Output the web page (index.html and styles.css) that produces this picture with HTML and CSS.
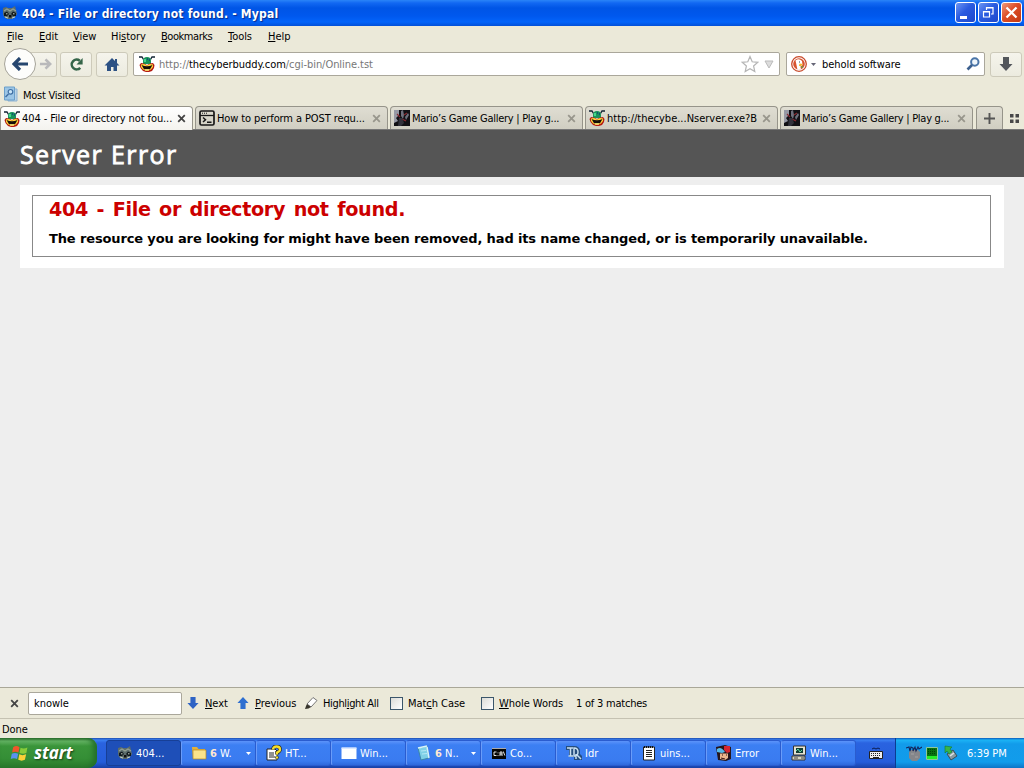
FILE: index.html
```html
<!DOCTYPE html>
<html lang="en">
<head>
<meta charset="utf-8">
<title>404 - File or directory not found. - Mypal</title>
<link rel="stylesheet" href="styles.css">
</head>
<body>
<svg class="defs" width="0" height="0">
  <symbol id="raccoon" viewBox="0 0 16 16"><path d="M1 3 4 2l2 1h4l3-2 1 4 1 4-2 3-3 2H5l-3-2-1-3z" fill="#5c6d6c"/><path d="M2 6 5 4l3 2 3-2 3 2" fill="none" stroke="#94a193" stroke-width="1.200"/><path d="M2 8l3-1.500L7 9l-2 2H2zM9 9l2-2.500L14 8v3h-3z" fill="#10191b"/><path d="M4 8.800h1.500M11 8.800h1.500M3 12l3 1M13 12l-3 1" stroke="#c6cec2"/><path d="M7 10h2.500v2.500H7z" fill="#111"/></symbol>
  <symbol id="buddy" viewBox="0 0 16 16"><path d="M0 1h3l1.500 2.500M16 1h-3l-1.500 2.500" fill="none" stroke="#123" stroke-width="1.300"/><path d="M4 5Q4 1 8 1t4 4v3H4z" fill="#18945a"/><path d="M5 3h2v3H5z" fill="#45d58b"/><path d="M8 3h1M10 4h1" stroke="#113b80" stroke-width="1.500"/><path d="M2 7 .5 9l1 3 2.500 3 3 1h3l3-1 2-3 .5-3L14 7l-3 .5L8 9 5 7.500z" fill="#b51b12"/><path d="M2 8.500 5 8l3 1.500L11 8l3 .5V11l-2 2.500-3 1.200H7L4 13.500 2 11z" fill="#ffd83b"/><path d="M2.500 9Q8 11.500 13.500 9L11 13.300H5z" fill="#160d08"/><path d="M6 14h4" stroke="#fff29b"/></symbol>
  <symbol id="mario" viewBox="0 0 16 16"><path d="M0 0h16v16H0z" fill="#111014"/><path d="M0 0h5v5L2 8l2 3-4 2z" fill="#9799a5"/><path d="m7 1 2-1 1 5-1 4-2-3zM11 7l3-4 1 2-3 5z" fill="#6f717e"/><path d="m3 4 3 3M10 5l3-2M8 9l4 2" stroke="#8a2a32" stroke-width="1.200"/><path d="M5 8h3l2 5-3 3H4z" fill="#31313b"/></symbol>
  <symbol id="x" viewBox="0 0 9 9"><path d="m1.200 1.200 6.600 6.600m0-6.600L1.200 7.800" fill="none" stroke="currentColor" stroke-width="1.800"/></symbol>
  <symbol id="down" viewBox="0 0 14 16"><path d="M4 1h6v7h3.500L7 15 .5 8H4z"/></symbol>
</svg>

<header class="titlebar">
  <svg class="i16 app"><use href="#raccoon"/></svg>
  <span class="title">404 - File or directory not found. - Mypal</span>
  <div class="winbtns">
    <span class="wb"><svg viewBox="0 0 21 21"><path d="M5 14h7v3H5z" fill="#fff"/></svg></span>
    <span class="wb"><svg viewBox="0 0 21 21"><path d="M5.500 9.500h6V15h-6zM5 10h7M8.500 8V5.500H15V12h-2M8.500 6H15" fill="none" stroke="#fff" stroke-width="1.200"/></svg></span>
    <span class="wb close"><svg viewBox="0 0 21 21"><path d="m5.500 5.500 10 10m0-10-10 10" stroke="#fff" stroke-width="2.300"/></svg></span>
  </div>
</header>

<nav class="menu">
  <span class="m1"><u>F</u>ile</span><span class="m2"><u>E</u>dit</span><span class="m3"><u>V</u>iew</span><span class="m4">Hi<u>s</u>tory</span><span class="m5"><u>B</u>ookmarks</span><span class="m6"><u>T</u>ools</span><span class="m7"><u>H</u>elp</span>
</nav>

<div class="nav">
  <div class="back"><svg viewBox="0 0 16 14"><path d="M8 1 2 7l6 6M2.500 7H16" fill="none" stroke="#26466f" stroke-width="3.200"/></svg></div>
  <div class="btn fwd"><svg viewBox="0 0 14 12"><path d="m7 1 5 5-5 5M11 6H1" fill="none" stroke="#b9b9bb" stroke-width="2.800"/></svg></div>
  <div class="btn reload"><svg viewBox="0 0 16 16"><path d="M12 11.500A5.200 5.200 0 1 1 11.500 4" fill="none" stroke="#346448" stroke-width="2.700"/><path d="M14.500 1v7H8z" fill="#346448"/></svg></div>
  <div class="btn home"><svg viewBox="0 0 16 15"><path d="M8 1 .5 8.500H3V14h4v-4h2.500v4H13V8.500h2.500L13 6V2h-2v2z" fill="#2c5184"/></svg></div>
  <div class="field url"><svg class="i16"><use href="#buddy"/></svg><span class="addr">http://<b>thecyberbuddy.com</b>/cgi-bin/Online.tst</span>
    <svg class="star" viewBox="0 0 18 18"><path d="m9 1.500 2.200 5.300 5.600.5-4.200 3.700 1.200 5.600L9 13.700l-4.800 2.900 1.200-5.600L1.200 7.300l5.600-.5z" fill="#fff" stroke="#b5b5b5" stroke-width="1.200"/></svg>
    <svg class="tri" viewBox="0 0 10 9"><path d="M1 1h8L5 8z" fill="#ddd" stroke="#bbb"/></svg></div>
  <div class="field search"><svg class="i16" viewBox="0 0 16 16"><circle cx="8" cy="8" r="7.300" fill="#fff" stroke="#c84a2b" stroke-width="1.300"/><circle cx="8" cy="8" r="5.800" fill="#d8532f"/><path d="M4.500 4.500Q8 2 11 5l.5 4-2 1.500.5 3-3.500.5-1-5z" fill="#fff"/><path d="m8.500 7.500 3.500.5-2 2H8z" fill="#f7b52c"/><path d="m9 11 3-1v2z" fill="#55a64b"/><path d="M8 6h1" stroke="#246"/></svg>
    <svg class="caret" viewBox="0 0 5 3"><path d="M0 0h5L2.500 3z" fill="#667"/></svg><span class="query">behold software</span>
    <svg class="mag" viewBox="0 0 14 14"><circle cx="8.800" cy="5" r="3.700" fill="#eef5fb" stroke="#4a75a8" stroke-width="2"/><path d="M6 8 1.500 12.500" stroke="#3b5f8e" stroke-width="2.600"/></svg></div>
  <div class="btn dl"><svg viewBox="0 0 14 16"><use href="#down" fill="#53565b"/></svg></div>
</div>

<div class="bookmarks"><svg class="i16" viewBox="0 0 16 16"><path d="M5 3h9v12H5z" fill="#bcd4e6" stroke="#8fb3d3"/><path d="M1.500 1h10v13h-10z" fill="#9cc6e6" stroke="#6b9fca"/><circle cx="7.500" cy="5.800" r="2.300" fill="#c9e5f8" stroke="#3f6fa3" stroke-width="1.200"/><path d="m5.500 8-3 3" stroke="#3f6fa3" stroke-width="1.500"/></svg><span>Most Visited</span></div>

<div class="tabs">
  <div class="tab on"><svg class="i16"><use href="#buddy"/></svg><span class="t1">404 - File or directory not fou...</span><svg class="tx"><use href="#x"/></svg></div>
  <div class="tab"><svg class="i16" viewBox="0 0 16 16"><rect x="1" y="1" width="14" height="14" rx="1.500" fill="none" stroke="#171717" stroke-width="1.700"/><path d="M1 5.500h14" stroke="#171717" stroke-width="1.300"/><path d="M3 3.200h1m1 0h1m1 0h1" stroke="#171717"/><path d="m4 7.500 2.500 2.200L4 12M8 12.300h4.500" fill="none" stroke="#171717" stroke-width="1.500"/></svg><span class="t2">How to perform a POST requ...</span><svg class="tx"><use href="#x"/></svg></div>
  <div class="tab"><svg class="i16"><use href="#mario"/></svg><span class="t3">Mario’s Game Gallery | Play g...</span><svg class="tx"><use href="#x"/></svg></div>
  <div class="tab"><svg class="i16"><use href="#buddy"/></svg><span class="t4">http://thecybe...Nserver.exe?B</span><svg class="tx"><use href="#x"/></svg></div>
  <div class="tab"><svg class="i16"><use href="#mario"/></svg><span class="t3">Mario’s Game Gallery | Play g...</span><svg class="tx"><use href="#x"/></svg></div>
  <div class="tab new"><svg viewBox="0 0 11 11"><path d="M5.500 0v11M0 5.500h11" stroke="#555" stroke-width="1.900"/></svg></div>
  <svg class="grid" viewBox="0 0 9 9"><path d="M0 0h3.500v3.500H0zM5.500 0H9v3.500H5.500zM0 5.500h3.500V9H0zM5.500 5.500H9V9H5.500z" fill="#484848"/></svg>
</div>

<main class="page">
  <div class="head"><h1>Server Error</h1></div>
  <div class="card"><div class="frame"><h2>404 - File or directory not found.</h2><h3>The resource you are looking for might have been removed, had its name changed, or is temporarily unavailable.</h3></div></div>
</main>

<div class="find">
  <svg class="fx"><use href="#x"/></svg>
  <div class="finput">knowle</div>
  <svg class="arr" viewBox="0 0 14 16"><use href="#down" fill="#2e63c4"/></svg><span class="f1"><u>N</u>ext</span>
  <svg class="arr up" viewBox="0 0 14 16"><use href="#down" fill="#2e6fd0"/></svg><span class="f2"><u>P</u>revious</span>
  <svg class="pen" viewBox="0 0 14 14"><path d="m3 8 6-6.500 4 3L7 11z" fill="#fff" stroke="#777"/><path d="m3 8 4 3-2.500 1.500L1 13l1-3z" fill="#37352c"/></svg><span class="f3">Highl<u>i</u>ght All</span>
  <i class="box"></i><span class="f4">Mat<u>c</u>h Case</span>
  <i class="box"></i><span class="f5"><u>W</u>hole Words</span><span class="f6">1 of 3 matches</span>
</div>
<div class="status"><span>Done</span></div>

<footer class="task">
  <div class="start"><svg viewBox="0 0 18 18"><path d="M3 3q3-2 6 0L8 8Q5 6.500 2 8z" fill="#f0562b"/><path d="M10 3.500q3 1.500 6.500-.3L15.500 8.500q-3 1.500-6.500 0z" fill="#88cc3a"/><path d="M1.700 9.300q3-1.700 6 0l-1 5q-3-1.700-6 0z" fill="#5a92f0"/><path d="M8.800 9.800q3 1.500 6.500 0l-1.200 5.200q-3 1.500-6.300 0z" fill="#fbd038"/></svg><span>start</span></div>
  <div class="tasks">
    <div class="tb on"><svg class="i16"><use href="#raccoon"/></svg><span>404...</span></div>
    <div class="tb"><svg class="i16" viewBox="0 0 16 16"><path d="M1 2h5l1.500 2H14v10H2z" fill="#e3b13b"/><path d="M2 5h13v9H2z" fill="#fbe38b" stroke="#b98720" stroke-width=".7"/></svg><span><b>6</b> W.</span><svg class="dd" viewBox="0 0 5 3"><path d="M0 0h5L2.500 3z" fill="#fff"/></svg></div>
    <div class="tb"><svg class="i16" viewBox="0 0 16 16"><path d="M1 4h8l2 2v9H1z" fill="#fff" stroke="#222"/><path d="M3 8h5M3 10h5M3 12h6" stroke="#222"/><path d="M7 4.500q0-3 3.500-3T14 4.500q0 2-3 3v2M11 11.500v2" fill="none" stroke="#222" stroke-width="3.600"/><path d="M7 4.500q0-3 3.500-3T14 4.500q0 2-3 3v2M11 11.500v2" fill="none" stroke="#f7e02b" stroke-width="2.300"/></svg><span>HT...</span></div>
    <div class="tb"><svg class="i16" viewBox="0 0 16 16"><path d="M.500 3h15v11H.500z" fill="#fff"/><path d="M.500 3h15" stroke="#cfe0ff" stroke-width="1.500"/></svg><span>Win...</span></div>
    <div class="tb"><svg class="i16" viewBox="0 0 16 16"><path d="m2 3 9-2 2 12-8 2z" fill="#7fd0e6" stroke="#3b87a8"/><path d="m2 3 9-2M11 2l2 11" stroke="#d8f3fa" stroke-width="1.500"/><path d="m5 6 5-.5M6 9l5-.5" stroke="#b5e8f5"/></svg><span><b>6</b> N..</span><svg class="dd" viewBox="0 0 5 3"><path d="M0 0h5L2.500 3z" fill="#fff"/></svg></div>
    <div class="tb"><svg class="i16" viewBox="0 0 16 16"><path d="M1 3h14v11H1z" fill="#050505"/><path d="M1 3.500h14" stroke="#aaa"/><path d="M5.500 7H3v3.500h2.500M7 7.500v.8M7 10v.8M9 11V7h2v4M9 9h2M12.300 6.500l1.500 4" fill="none" stroke="#fff" stroke-width=".9"/></svg><span>Co...</span></div>
    <div class="tb"><svg class="i16" viewBox="0 0 16 16"><path d="M0 1h8q6 0 6 5.500V9l2 2v4H8v-3H3V5H0z" fill="#254d7d"/><path d="M1 3h6M4.500 3v8M2.500 11H7M8 3q4 0 4 4t-4 4zM10 14V9M11 10l4 4" fill="none" stroke="#c7def0" stroke-width="1.500"/></svg><span>Idr</span></div>
    <div class="tb"><svg class="i16" viewBox="0 0 16 16"><path d="M2.500 2h11v13h-11z" fill="#fff" stroke="#222"/><path d="M3 2h10" stroke="#111" stroke-width="2" stroke-dasharray="1 1"/><path d="M5 5.500h6M5 7.500h6M5 9.500h6M5 11.500h6" stroke="#222"/></svg><span>uins...</span></div>
    <div class="tb"><svg class="i16" viewBox="0 0 16 16"><path d="M0 2 9 0l6 2v12l-5 2-8-1z" fill="#26151a"/><path d="M8 1h6v6l-3 1-3-3z" fill="#d62530"/><path d="M1 4q4-3 8 3l-3 1-5-1z" fill="#57b9e8"/><path d="M4 8.500h8V13l-3 2-5-1z" fill="#eab78c"/><path d="M6 10h1M10 10h1M5 13l4 1" stroke="#36100e"/></svg><span>Error</span></div>
    <div class="tb"><svg class="i16" viewBox="0 0 16 16"><path d="M2.500 1h12v9h-12z" fill="#e4e2d2" stroke="#333"/><path d="M5 3h7v5H5z" fill="#123c35"/><path d="m5 6 2-2 2 3 2-2" fill="none" stroke="#65d7a4"/><path d="M1 11h13v4H1z" fill="#d6d3c1" stroke="#333"/><path d="M3 13h4M10 13h3" stroke="#444"/></svg><span>Win...</span></div>
  </div>
  <div class="kbd"><svg viewBox="0 0 14 14"><path d="m3 3 2-1 2 1 2-1 2 1" fill="none" stroke="#0c1d50"/><path d="M.5 5.500h13v7H.5z" fill="#eee" stroke="#222"/><path d="M2 7.500h10M2 9.500h10" stroke="#222" stroke-dasharray="1 1"/><path d="M4 11.500h6" stroke="#222"/></svg></div>
  <div class="tray">
    <svg class="i16" viewBox="0 0 16 16"><path d="M3 7 5 5h7l2 2v6l-3 3H6l-3-3z" fill="#85868a"/><path d="m0 3 3-1 1 4 1-4 2 1v3l2-4 1 4 2-4 1 2 3-2" fill="none" stroke="#12245a" stroke-width="1.100"/><path d="M5 9h3M9 12h3" stroke="#a4a2a2"/></svg>
    <svg class="i12" viewBox="0 0 12 13"><path d="M.500.500h11v12H.500z" fill="#087110" stroke="#8fc79a"/><path d="M2 2.500h8M2 4.500h8M2 6.500h8" stroke="#034207" stroke-dasharray="1 1"/><path d="M1 9h10v3H1z" fill="#25ec28"/></svg>
    <svg class="i16 usb" viewBox="0 0 16 16"><path d="m4 9 6-4 4 6-6 4z" fill="#8a9aa0" stroke="#384d59"/><path d="m7 11 4-3" stroke="#dfe6e6" stroke-width="1.500"/><path d="m2 1 7 1-2 2 2 3-3 2-2-3-2 2z" fill="#38b547" stroke="#147c2b" stroke-width=".6"/></svg>
    <span class="clock">6:39 PM</span>
  </div>
</footer>
</body>
</html>
```

FILE: styles.css
```css
* { box-sizing: border-box; }
body {
  margin: 0; width: 1024px; height: 768px; overflow: hidden;
  display: flex; flex-direction: column;
  font: 11px/14px "DejaVu Sans Condensed", "DejaVu Sans", sans-serif;
  letter-spacing: -.05px;
  color: #000; background: #ebe9d9; white-space: nowrap;
}
svg { display: block; flex: none; }
span { flex: none; }
u { text-underline-offset: 1px; text-decoration-thickness: 1px; }
.defs { position: absolute; }
.i16 { width: 16px; height: 16px; }
.i12 { width: 12px; height: 13px; }

.titlebar {
  height: 26px; flex: none; display: flex; align-items: center; padding-left: 2px;
  background: linear-gradient(#2a84f8 0, #1268f2 3px, #0055e6 8px, #0058ee 16px, #0364fa 22px, #0350d8 26px);
}
.title {
  margin: 1px 0 0 4px; color: #fff; text-shadow: 1px 1px 1px #0a2a88;
  font: bold 12px/16px "DejaVu Sans Condensed", sans-serif; letter-spacing: .2px;
}
.winbtns { display: flex; gap: 2px; margin: -1px 0 0 auto; padding-right: 2px; }
.wb {
  width: 21px; height: 21px; border: 1px solid #fff; border-radius: 3px;
  background: linear-gradient(135deg, #6d95f3, #2a5be0 45%, #1d48cc);
}
.wb svg { margin: -1px; width: 21px; height: 21px; }
.wb.close { background: linear-gradient(135deg, #f09a7d, #dd4d26 45%, #c23a15); }

.menu { height: 21px; flex: none; display: flex; align-items: center; padding-left: 7px; }
.m1 { width: 32px; } .m2 { width: 34px; } .m3 { width: 38px; } .m4 { width: 50px; }
.m5 { width: 67px; letter-spacing: -.45px; } .m6 { width: 40px; }

.nav { height: 37px; flex: none; display: flex; align-items: center; padding: 0 3px 3px 4px; }
.back {
  width: 32px; height: 32px; border: 1px solid #a5a398; border-radius: 50%; z-index: 1; flex: none;
  background: #fdfdfb; display: flex; align-items: center; justify-content: center;
}
.back svg { width: 16px; height: 14px; }
.btn {
  height: 25px; width: 32px; border: 1px solid #cdcaba; border-radius: 3px; flex: none;
  background: linear-gradient(#f5f4ec, #ecebdf); display: flex; align-items: center; justify-content: center;
}
.fwd { width: 28px; margin-left: -7px; border-left: 0; }
.fwd svg { width: 13px; height: 12px; margin-left: 5px; }
.reload { margin-left: 3px; }
.reload svg { width: 15px; height: 15px; }
.home { margin-left: 4px; }
.home svg { width: 16px; height: 15px; }
.field {
  height: 24px; border: 1px solid #aaa79b; border-radius: 2px; background: #fff;
  display: flex; align-items: center; flex: none;
}
.url { width: 647px; margin-left: 5px; padding: 0 5px; }
.addr { margin: 1px 0 0 4px; color: #777; }
.addr b { font-weight: normal; color: #000; }
.star { width: 18px; height: 18px; margin-left: auto; }
.tri { width: 10px; height: 9px; margin-left: 5px; }
.search { width: 199px; margin-left: 6px; padding: 0 4px; }
.caret { width: 5px; height: 3px; margin-left: 4px; }
.query { margin: 1px 0 0 6px; }
.mag { width: 14px; height: 14px; margin-left: auto; }
.dl { margin-left: 5px; }
.dl svg { width: 16px; height: 16px; }

.bookmarks { height: 22px; flex: none; display: flex; align-items: center; padding: 0 0 2px 3px; }
.bookmarks span { margin: 3px 0 0 4px; letter-spacing: -.25px; }

.tabs { height: 24px; flex: none; display: flex; gap: 2px; background: linear-gradient(transparent 23px, #777 23px); }
.tab {
  width: 193px; height: 23px; border: 1px solid #96948a; border-bottom: 0; border-radius: 4px 4px 0 0;
  background: linear-gradient(#dfddd2, #d0cec2); display: flex; align-items: center; padding: 0 6px 0 3px; flex: none;
}
.tab.on { background: linear-gradient(#fff, #f4f3ee); height: 24px; color: #000; }
.tab span { margin: 1px 0 0 2px; }
.t1, .t2 { letter-spacing: -.1px; }
.t3 { letter-spacing: -.27px; }
.t4 { letter-spacing: 0; }
.tx { width: 9px; height: 9px; margin-left: auto; color: #98968c; }
.on .tx { color: #444; }
.tab.new { width: 27px; margin-left: 1px; padding: 0; justify-content: center; }
.new svg { width: 11px; height: 11px; }
.grid { width: 9px; height: 9px; margin: 8px 0 0 5px; }

.page { flex: 1; background: #eee; min-height: 0; }
.head { height: 47px; background: #555; display: flex; align-items: center; padding: 1px 0 0 20px; }
h1 { margin: 0; font: 500 25px/30px "Open Sans", sans-serif; letter-spacing: 1.4px; color: #fff; -webkit-text-stroke: .8px #fff; }
.card { margin: 8px 20px 0; height: 83px; background: #fff; padding: 10px 13px 11px 12px; }
.frame { height: 62px; border: 1px solid #888; padding: 0 0 0 16px; }
h2 { margin: 1px 0 0; font: bold 19.2px/25px "DejaVu Sans", sans-serif; letter-spacing: -.32px; word-spacing: 2.100px; color: #c00; }
h3 { margin: 8px 0 0; font: bold 13px/18px "DejaVu Sans", sans-serif; letter-spacing: -.135px; }

.find { height: 32px; flex: none; border-top: 1px solid #a9a798; border-bottom: 1px solid #c5c2b2; display: flex; align-items: center; padding-left: 10px; }
.fx { width: 9px; height: 9px; color: #444; }
.find span { margin-top: 1px; }
.finput { width: 154px; height: 23px; margin-left: 9px; border: 1px solid #aaa79b; border-radius: 2px; background: #fff; padding: 4px 5px; }
.arr { width: 12px; height: 14px; margin-left: 5px; }
.up { transform: rotate(180deg); margin-left: 4px; }
.f1 { width: 28px; margin-left: 6px; } .f2 { width: 46px; margin-left: 6px; }
.pen { width: 14px; height: 14px; margin-left: 3px; }
.f3 { width: 60px; margin-left: 5px; letter-spacing: -.35px; }
.box { width: 13px; height: 13px; margin-left: 7px; flex: none; border: 1px solid #3b566b; background: linear-gradient(135deg, #dcdcd7, #fff); }
.f4 { width: 73px; margin-left: 5px; } .f4 + .box { margin-left: 0; }
.f5 { width: 77px; margin-left: 5px; }
.f6 { letter-spacing: -.22px; }
.status { height: 19px; flex: none; padding: 4px 0 0 2px; }

.task {
  height: 30px; flex: none; display: flex; color: #fff; letter-spacing: 0;
  background: linear-gradient(#1f4fb0 0, #3a80f2 2px, #2a63e0 5px, #245ddb 24px, #1941a5 30px);
}
.start {
  width: 97px; display: flex; align-items: center; padding-left: 10px; border-radius: 0 9px 9px 0;
  background: linear-gradient(#2d6b2c 0, #66b565 3px, #3a953a 8px, #358f36 20px, #2a7a2b 30px);
  box-shadow: inset -4px 0 5px #24702a;
}
.start svg { width: 19px; height: 19px; }
.start span { margin: 0 0 0 5px; font: italic bold 17px/22px "Open Sans", sans-serif; letter-spacing: -.1px; text-shadow: 1px 1px 2px #163d16; }
.tasks { display: flex; margin-left: 9px; }
.tb {
  width: 75px; height: 26px; margin-top: 2px; flex: none; display: flex; align-items: center; padding-left: 9px;
  border: 1px solid #2a5ccf; border-left-color: #6a9cf9; border-radius: 3px;
  background: linear-gradient(#5c93fa, #3c7ff3 4px, #3a7bf0 20px, #2f69dc);
}
.tb.on { background: #1e4fb8; border-color: #173f96; padding-left: 10px; }
.tb span { margin: 1px 0 0 3px; }
.tb b { color: #ffe9d0; }
.dd { width: 5px; height: 3px; margin: 0 4px 0 auto; }
.kbd { width: 39px; padding: 8px 0 0 13px; }
.kbd svg { width: 14px; height: 14px; }
.tray {
  flex: 1; display: flex; align-items: center; padding-left: 10px; border-left: 1px solid #0b3c91;
  background: linear-gradient(#0c59b9 0, #1bb3f5 2px, #129bea 6px, #119ceb 24px, #0d74c6 30px);
}
.tray .i12 { margin-left: 4px; } .usb { margin-left: 5px; }
.clock { margin: 1px 0 0 8px; }
```
